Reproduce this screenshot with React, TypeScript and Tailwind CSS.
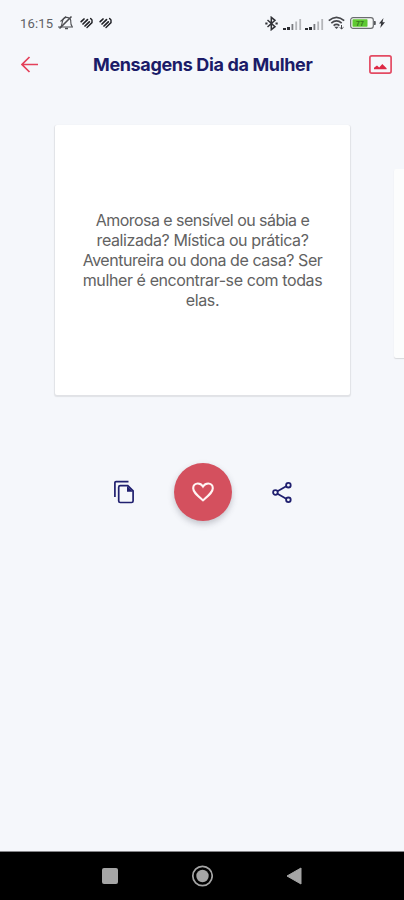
import type { ReactNode } from "react";

const TITLE = "Mensagens Dia da Mulher";

const MESSAGE = [
  { text: "Amorosa e sensível ou sábia e", tracking: "tracking-[-0.54px]" },
  { text: "realizada? Mística ou prática?", tracking: "tracking-[-0.4px]" },
  { text: "Aventureira ou dona de casa? Ser", tracking: "tracking-[-0.45px]" },
  { text: "mulher é encontrar-se com todas", tracking: "tracking-[-0.4px]" },
  { text: "elas.", tracking: "tracking-[-0.4px]" },
];

function MutedBell() {
  return (
    <svg width="18" height="16" viewBox="0 0 18 16" fill="none" stroke="#4b4c50" strokeWidth="1.1">
      <path d="M1 12h15M4 11.500C5 10 5 8 5.500 6.200 6.200 3.500 8.500 2 11 2.600c2 .6 3 2.200 2.800 4.400-.1 2 .2 3.200 1.400 4.500" />
      <path d="M8 13.500h3" strokeWidth="1.500" />
      <path d="M2.500 13.500 14.500 1.500" strokeWidth="1.600" />
      <path d="M3.500 6.500 9 1.500" />
    </svg>
  );
}

function StripedHeart() {
  return (
    <svg width="13" height="12" viewBox="0 0 13 12" fill="none" stroke="#202126" strokeWidth="1.700" strokeLinecap="round">
      <path d="M1.200 4.600 4 2" />
      <path d="M3 7 7.500 2.700" />
      <path d="M5 9 9.300 4.900" />
      <path d="M7 10.600 12 5.600V3L10.600 1.500" strokeWidth="1.400" />
    </svg>
  );
}

function Bluetooth() {
  return (
    <svg width="13" height="15" viewBox="0 0 13 15" fill="none" stroke="#303136" strokeWidth="1.500">
      <path d="m2.500 4 7.500 6.700-3.700 3V1.300l3.700 3-7.500 6.700" />
      <path d="M.3 7.500h2.200M10.500 7.500h2.200" strokeWidth="1.900" />
    </svg>
  );
}

function Signal() {
  return (
    <svg width="19" height="11" viewBox="0 0 19 11">
      <path d="M0 9h3v2H0zM4 8h3v3H4z" fill="#2b2c31" />
      <path d="M8.500 5h1.800v6H8.500z" fill="#77797e" />
      <path d="M12.300 2.500h1.800V11h-1.800zM16.300 0h1.800v11h-1.800z" fill="#b4b6ba" />
    </svg>
  );
}

function Wifi() {
  return (
    <svg width="18" height="14" viewBox="0 0 18 14" fill="none" stroke="#45464b" strokeWidth="1.700">
      <path d="M.8 4.700Q8.500-2 16.200 4.700M3.300 7.200q5.200-4.500 10.400 0M5.600 9.600q2.900-2.500 5.800 0" />
      <path d="m8.500 13-2.200-2.300h4.400z" fill="#45464b" stroke="none" />
      <path d="M13.500 9v4M11.800 11.300l1.700 1.700 2-1.700" strokeWidth="1" />
    </svg>
  );
}

function Battery() {
  return (
    <svg width="27" height="12" viewBox="0 0 27 12">
      <rect x=".7" y=".7" width="22.600" height="10.600" rx="2.400" fill="#f8faf9" stroke="#6b6d70" strokeWidth="1.200" />
      <rect x="2.500" y="2.300" width="15" height="7.400" rx=".6" fill="#5fc932" />
      <text x="6" y="8.700" fontSize="7" fontFamily="Liberation Sans, sans-serif" fontWeight="700" fill="#35751f">77</text>
      <path d="M24 4h1.500q.8 2 0 4H24z" fill="#55575b" />
    </svg>
  );
}

function StatusBar() {
  return (
    <div className="flex h-[46px] items-center pl-[20px]">
      <span className="w-[37px] whitespace-nowrap pt-px font-['Roboto',sans-serif] text-[13px] tracking-[0.2px] text-[#606166]">
        16:15
      </span>
      <MutedBell />
      <div className="ml-[5px] flex gap-[6px]">
        <StripedHeart />
        <StripedHeart />
      </div>
      <div className="ml-auto flex items-center pr-[19px]">
        <Bluetooth />
        <div className="ml-[5px] mr-[4px] flex gap-[3px] pt-[2px]">
          <Signal />
          <Signal />
        </div>
        <Wifi />
        <span className="ml-[4px]">
          <Battery />
        </span>
        <svg width="6" height="10" viewBox="0 0 6 10" className="ml-[2px]" fill="#34353a">
          <path d="M4.500 0 0 5.500h2.200L1.200 10 6 4.200H3.500z" />
        </svg>
      </div>
    </div>
  );
}

function Header() {
  return (
    <header className="flex h-9 items-center pl-[21px] pr-[12px]">
      <svg width="17" height="17" viewBox="0 0 17 17" fill="none" stroke="#e4405a" strokeWidth="1.700">
        <path d="M17 8.500H1.500M8.500 1 1 8.500 8.500 16" />
      </svg>
      <h1 className="ml-[55px] whitespace-nowrap text-[18px] font-bold tracking-[-0.36px] text-[#1b1b68]">
        {TITLE}
      </h1>
      <svg width="23" height="19" viewBox="0 0 23 19" className="ml-auto" fill="none">
        <rect x=".9" y=".9" width="21.200" height="17.200" rx="1.800" stroke="#e34b63" strokeWidth="1.700" />
        <path d="M5 14.200v-1.500L8 10.500l2.200 1.900L13.300 9l4.300 4.200v1z" fill="#dd2945" />
      </svg>
    </header>
  );
}

function IconButton({ label, children }: { label: string; children: ReactNode }) {
  return (
    <button aria-label={label} className="flex size-[22px] items-center justify-center">
      {children}
    </button>
  );
}

function Actions() {
  return (
    <div className="flex items-center justify-center gap-[39px] pl-px">
      <IconButton label="Copiar">
        <svg width="22" height="24" viewBox="0 0 22 24" className="shrink-0" fill="none" stroke="#20206f" strokeWidth="1.700">
          <path d="M1.900 17V2.800q0-1.200 1.200-1.200h12.400" />
          <path d="M7.300 5.600h7.500l5.300 5.300v10q0 1.600-1.600 1.600H7.300q-1.600 0-1.600-1.600V7.200q0-1.600 1.600-1.600z" />
          <path d="M14 6v5.700h6z" fill="#20206f" stroke="none" />
        </svg>
      </IconButton>
      <button
        aria-label="Favoritar"
        className="flex size-[58px] items-center justify-center rounded-full bg-[#d4505e] shadow-[0_3px_6px_rgba(60,60,80,0.28)]"
      >
        <svg width="22" height="20" viewBox="0 0 22 20" fill="none" stroke="#fff5f4" strokeWidth="2.100">
          <path d="M11 18.300C5.200 13.200 1.200 10.200 1.200 6.200c0-2.700 2.100-4.700 4.600-4.700 2.100 0 4 1.200 5.200 3 1.200-1.800 3.100-3 5.200-3 2.500 0 4.600 2 4.600 4.700 0 4-4 7-9.800 12.100z" />
        </svg>
      </button>
      <IconButton label="Compartilhar">
        <svg width="20" height="21" viewBox="0 0 20 21" className="shrink-0" fill="none" stroke="#20206f" strokeWidth="1.800">
          <path d="m5.500 9.300 8.700-5M5.500 11.700l8.700 5" />
          <circle cx="3.400" cy="10.500" r="2.300" />
          <circle cx="16.400" cy="3.200" r="2.300" />
          <circle cx="16.400" cy="17.800" r="2.300" />
        </svg>
      </IconButton>
    </div>
  );
}

function NavBar() {
  return (
    <nav className="mt-auto flex h-[49px] items-center border-t border-[#858589] bg-black pl-[102px]">
      <span className="size-4 rounded-[2px] bg-[#a5a5a5]" />
      <svg width="22" height="22" viewBox="0 0 22 22" className="ml-[73px]">
        <circle cx="11.500" cy="11" r="9.700" fill="none" stroke="#a5a5a5" strokeWidth="1.700" />
        <circle cx="11.500" cy="11" r="6.200" fill="#a5a5a5" />
      </svg>
      <svg width="16" height="18" viewBox="0 0 16 18" className="ml-[73px]">
        <path d="M15 1v16L1 9z" fill="#a5a5a5" stroke="#a5a5a5" strokeLinejoin="round" />
      </svg>
    </nav>
  );
}

export default function App() {
  return (
    <div className="flex h-[900px] w-[404px] flex-col overflow-hidden bg-[#f5f7fb] font-['Inter',sans-serif]">
      <StatusBar />
      <Header />

      {/* Message carousel, the next card peeks in on the right */}
      <main className="mt-[43px] flex items-center gap-[44px] pl-[55px]">
        <article className="flex h-[270px] w-[295px] shrink-0 items-center justify-center rounded-[2px] bg-white shadow-[0_1px_1px_1px_rgba(50,50,50,0.1)]">
          <p className="text-center text-[16px] leading-5 text-[#626262]">
            {MESSAGE.map((line) => (
              <span key={line.text} className={`block whitespace-nowrap ${line.tracking}`}>
                {line.text}
              </span>
            ))}
          </p>
        </article>
        <article className="mt-[7px] h-[189px] w-[200px] shrink-0 rounded-[2px] bg-[#fcfdfd] shadow-[0_1px_1px_rgba(50,50,50,0.15)]" />
      </main>

      <div className="mt-[68px]">
        <Actions />
      </div>

      <NavBar />
    </div>
  );
}
